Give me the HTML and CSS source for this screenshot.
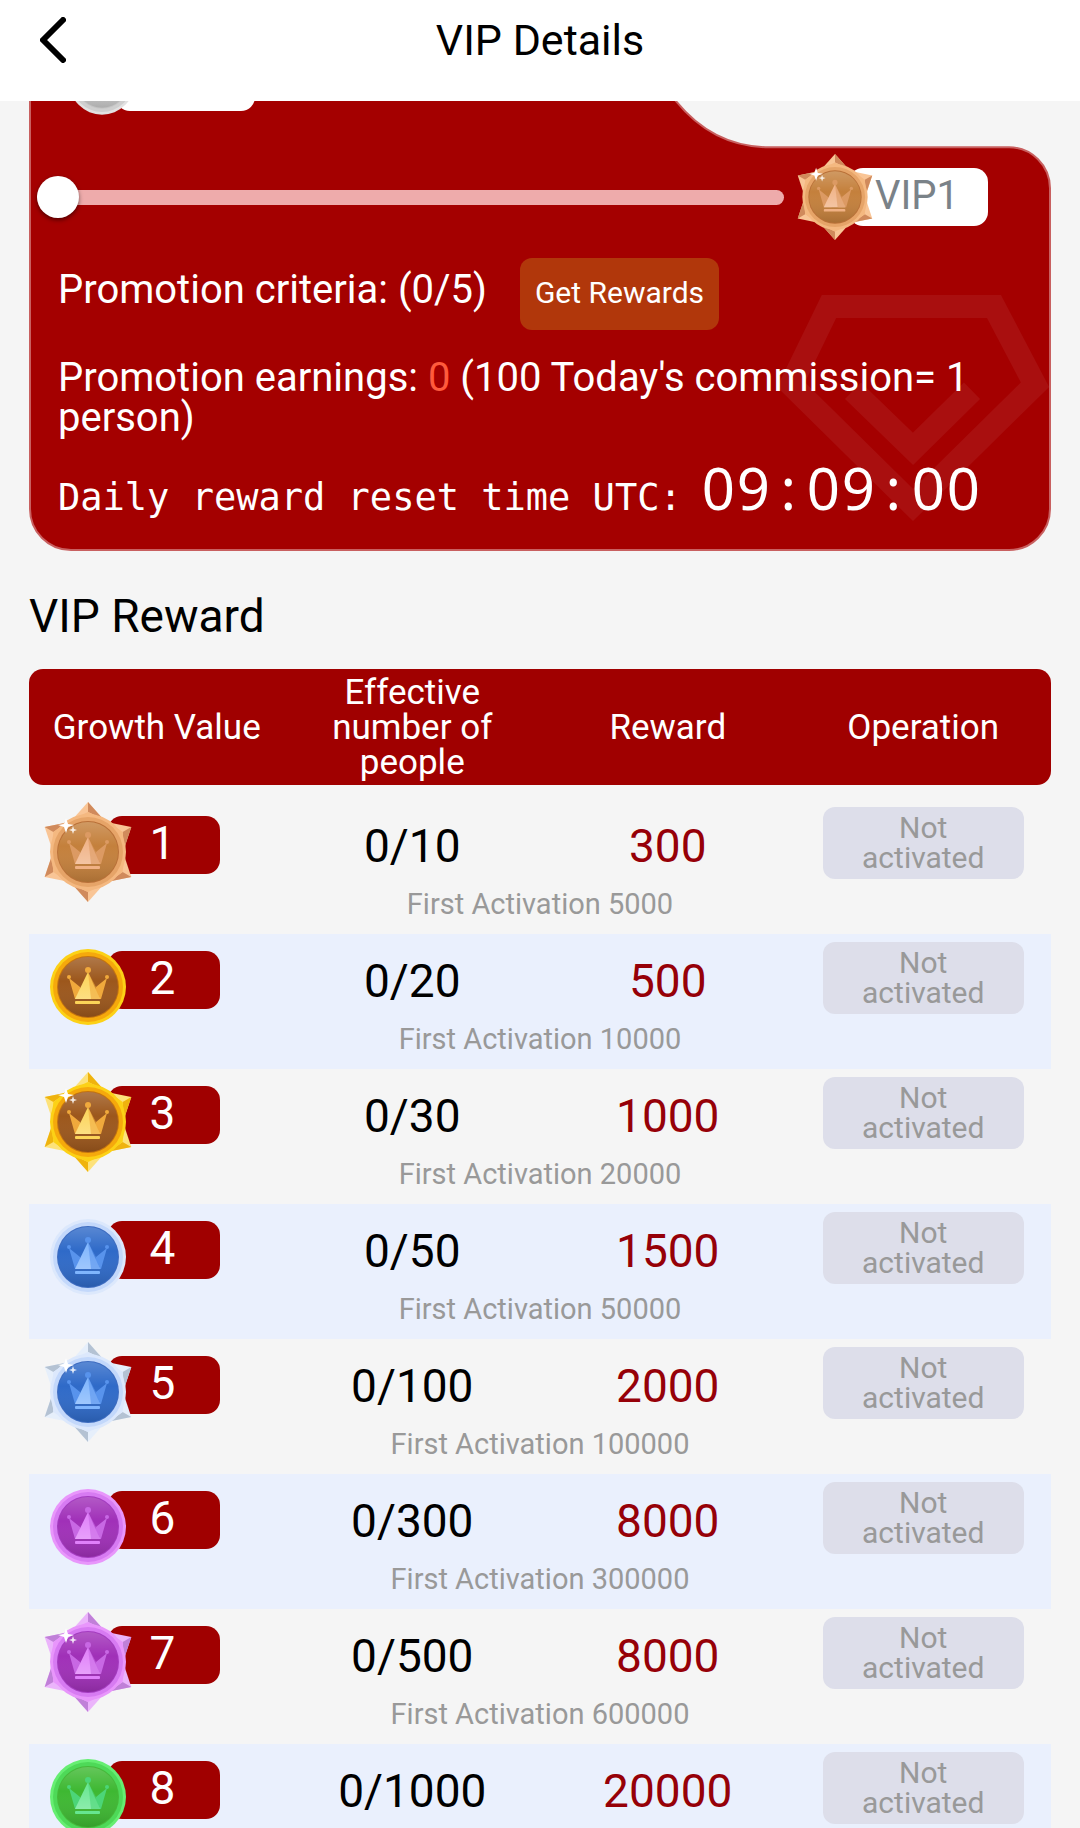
FILE: index.html
```
<!DOCTYPE html>
<html lang="en">
<head>
    <meta charset="UTF-8">
    <meta name="viewport" content="width=device-width, initial-scale=1.0">
    <title>VIP Details</title>
    <link rel="stylesheet" href="styles.css">
</head>
<body>

    <!-- Shared medal shapes, coloured by the medal-* classes -->
    <svg class="sprite" aria-hidden="true">
        <defs>
            <linearGradient id="faceShade" x1="0" y1="0" x2="0" y2="1">
                <stop offset="0" stop-color="#fff" stop-opacity="0.2"/>
                <stop offset="0.4" stop-color="#fff" stop-opacity="0"/>
                <stop offset="1" stop-color="#000" stop-opacity="0.14"/>
            </linearGradient>
            <linearGradient id="crownShade" x1="0" y1="0" x2="0" y2="1">
                <stop offset="0" stop-color="#fff" stop-opacity="0"/>
                <stop offset="1" stop-color="#fff" stop-opacity="0.25"/>
            </linearGradient>
            <g id="spike">
                <path class="spike-light" d="M0-50L-16-32H16Z"/>
                <path class="spike-dark" d="M0-50L15-33L0-40Z"/>
                <path class="spike-mid" d="M0-40L-9-36H9Z"/>
            </g>
            <g id="coin">
                <circle class="rim" r="38"/>
                <circle class="ring" r="35"/>
                <circle class="edge" r="31"/>
                <circle class="face" r="30"/>
                <circle fill="url(#faceShade)" r="30"/>
                <path class="wing" d="M-19-9L-8 0L-4 12H-13ZM19-9L8 0L4 12H13Z"/>
                <path class="crown" d="M0-15L-13 12H12Z"/>
                <path fill="url(#crownShade)" d="M0-15L-13 12H12Z"/>
                <path class="wing" opacity="0.6" d="M0-15L3 12H12L8 0Z"/>
                <rect class="crown" x="-13" y="14" width="25" height="3" rx="1"/>
                <circle class="wing" cy="-17" r="3"/>
                <circle class="wing" cx="-19" cy="-10" r="2"/>
                <circle class="wing" cx="19" cy="-10" r="2"/>
            </g>
        </defs>
        <symbol id="medal-round" viewBox="-44 -50 88 100">
            <use href="#coin"/>
        </symbol>
        <symbol id="medal-star" viewBox="-44 -50 88 100">
            <use href="#spike"/>
            <use href="#spike" transform="rotate(60)"/>
            <use href="#spike" transform="rotate(120)"/>
            <use href="#spike" transform="rotate(180)"/>
            <use href="#spike" transform="rotate(240)"/>
            <use href="#spike" transform="rotate(300)"/>
            <use href="#coin"/>
            <path fill="#fff" d="M-22-34L-20-28L-14-27L-20-25L-22-19L-24-25L-30-27L-24-28Z"/>
            <path fill="#fff" opacity="0.85" d="M-15-26L-14-23L-11-22L-14-21L-15-18L-16-21L-19-22L-16-23Z"/>
        </symbol>
    </svg>

    <header class="topbar">
        <button class="back" type="button" aria-label="Back">
            <svg width="26" height="46" viewBox="0 0 26 46" aria-hidden="true">
                <path d="M23 3L3 23L23 43"/>
            </svg>
        </button>
        <h1>VIP Details</h1>
    </header>

    <main class="content">
        <section class="card">
            <svg class="card-shape" viewBox="0 0 1022 529" preserveAspectRatio="none" aria-hidden="true">
                <path class="card-fill" d="M1 42A41 41 0 0 1 42 1H570C605 1 625 53 647 80C665 102 695 126 740 126H980A41 41 0 0 1 1021 167V487A41 41 0 0 1 980 528H42A41 41 0 0 1 1 487Z"/>
                <path class="card-mark" d="M800 285H965L1006 363L884 483L762 363Z"/>
                <path class="card-mark" d="M824 369L884 427L943 369"/>
            </svg>

            <div class="tag tag-current">
                <svg class="medal medal-silver" aria-hidden="true"><use href="#medal-round"/></svg>
            </div>

            <div class="progress">
                <input class="slider" type="range" min="0" max="5" value="0" aria-label="VIP progress">
                <div class="tag">
                    <svg class="medal medal-bronze" aria-hidden="true"><use href="#medal-star"/></svg>
                    VIP1
                </div>
            </div>

            <div class="criteria">
                <span>Promotion criteria: (0/5)</span>
                <button class="get-rewards" type="button">Get Rewards</button>
            </div>

            <p class="earnings">Promotion earnings: <span class="amount">0</span> (100 Today's commission= 1 person)</p>

            <p class="reset">Daily reward reset time UTC:<time class="clock"><span>0</span><span>9</span><span>:</span><span>0</span><span>9</span><span>:</span><span>0</span><span>0</span></time></p>
        </section>

        <h2>VIP Reward</h2>

        <table class="rewards">
            <thead>
                <tr>
                    <th>Growth Value</th>
                    <th>Effective number of people</th>
                    <th>Reward</th>
                    <th>Operation</th>
                </tr>
            </thead>
            <tbody>
                <tr>
                    <td><div class="level"><svg class="medal medal-bronze" aria-hidden="true"><use href="#medal-star"/></svg>1</div></td>
                    <td>0/10</td>
                    <td class="reward">300</td>
                    <td><button class="activate" type="button" disabled>Not activated</button></td>
                </tr>
                <tr><td class="note" colspan="4">First Activation 5000</td></tr>
            </tbody>
            <tbody>
                <tr>
                    <td><div class="level"><svg class="medal medal-gold" aria-hidden="true"><use href="#medal-round"/></svg>2</div></td>
                    <td>0/20</td>
                    <td class="reward">500</td>
                    <td><button class="activate" type="button" disabled>Not activated</button></td>
                </tr>
                <tr><td class="note" colspan="4">First Activation 10000</td></tr>
            </tbody>
            <tbody>
                <tr>
                    <td><div class="level"><svg class="medal medal-gold" aria-hidden="true"><use href="#medal-star"/></svg>3</div></td>
                    <td>0/30</td>
                    <td class="reward">1000</td>
                    <td><button class="activate" type="button" disabled>Not activated</button></td>
                </tr>
                <tr><td class="note" colspan="4">First Activation 20000</td></tr>
            </tbody>
            <tbody>
                <tr>
                    <td><div class="level"><svg class="medal medal-blue" aria-hidden="true"><use href="#medal-round"/></svg>4</div></td>
                    <td>0/50</td>
                    <td class="reward">1500</td>
                    <td><button class="activate" type="button" disabled>Not activated</button></td>
                </tr>
                <tr><td class="note" colspan="4">First Activation 50000</td></tr>
            </tbody>
            <tbody>
                <tr>
                    <td><div class="level"><svg class="medal medal-blue" aria-hidden="true"><use href="#medal-star"/></svg>5</div></td>
                    <td>0/100</td>
                    <td class="reward">2000</td>
                    <td><button class="activate" type="button" disabled>Not activated</button></td>
                </tr>
                <tr><td class="note" colspan="4">First Activation 100000</td></tr>
            </tbody>
            <tbody>
                <tr>
                    <td><div class="level"><svg class="medal medal-purple" aria-hidden="true"><use href="#medal-round"/></svg>6</div></td>
                    <td>0/300</td>
                    <td class="reward">8000</td>
                    <td><button class="activate" type="button" disabled>Not activated</button></td>
                </tr>
                <tr><td class="note" colspan="4">First Activation 300000</td></tr>
            </tbody>
            <tbody>
                <tr>
                    <td><div class="level"><svg class="medal medal-purple" aria-hidden="true"><use href="#medal-star"/></svg>7</div></td>
                    <td>0/500</td>
                    <td class="reward">8000</td>
                    <td><button class="activate" type="button" disabled>Not activated</button></td>
                </tr>
                <tr><td class="note" colspan="4">First Activation 600000</td></tr>
            </tbody>
            <tbody>
                <tr>
                    <td><div class="level"><svg class="medal medal-green" aria-hidden="true"><use href="#medal-round"/></svg>8</div></td>
                    <td>0/1000</td>
                    <td class="reward">20000</td>
                    <td><button class="activate" type="button" disabled>Not activated</button></td>
                </tr>
            </tbody>
        </table>
    </main>

</body>
</html>
```
FILE: styles.css
```
* {
    box-sizing: border-box;
}

body {
    display: flex;
    flex-direction: column;
    height: 100vh;
    margin: 0;
    overflow: hidden;
    background-color: #f5f5f5;
    color: #000;
    font-family: Roboto, sans-serif;
}

button {
    border: 0;
    padding: 0;
    font-family: inherit;
    cursor: pointer;
}

.sprite {
    position: absolute;
    width: 0;
    height: 0;
}

/* Top bar */
.topbar {
    display: grid;
    grid-template-columns: 1fr auto 1fr;
    align-items: center;
    flex: none;
    padding: 15px 40px 36px;
    background-color: #fff;
    position: relative;
    z-index: 1;
}

.topbar h1 {
    margin: 0;
    font-size: 43px;
    font-weight: 400;
    line-height: 50px;
}

.back {
    width: 26px;
    height: 46px;
    background: none;
}

.back svg {
    display: block;
    fill: none;
    stroke: #000;
    stroke-width: 6;
    stroke-linecap: round;
    stroke-linejoin: round;
}

.content {
    flex: 1;
    min-height: 0;
    overflow: hidden;
    padding: 0 29px;
}

/* Status card, scrolled partly under the top bar */
.card {
    position: relative;
    z-index: 0;
    margin-top: -80px;
    padding: 32px 29px 23px;
    color: #fff;
    font-size: 40px;
    line-height: 40px;
}

.card-shape {
    position: absolute;
    inset: 0;
    z-index: -1;
    width: 100%;
    height: 100%;
}

.card-fill {
    fill: #a40000;
    stroke: #c86060;
    stroke-width: 2;
}

.card-mark {
    fill: none;
    stroke: #fff;
    stroke-opacity: 0.06;
    stroke-width: 23;
}

.tag {
    position: relative;
    flex: none;
    width: 139px;
    height: 58px;
    padding-left: 26px;
    border-radius: 14px;
    background-color: #fff;
    color: #7a8288;
    font-size: 40px;
    line-height: 56px;
}

.tag .medal {
    left: -52px;
    top: -14px;
    width: 76px;
    height: 86px;
}

.tag-current {
    margin-left: 58px;
}

.progress {
    display: flex;
    align-items: center;
    gap: 65px;
    margin: 57px 34px 0 -21px;
}

.slider {
    flex: 1;
    appearance: none;
    height: 42px;
    margin: 0;
    background: none;
}

.slider::-webkit-slider-runnable-track {
    height: 15px;
    border-radius: 8px;
    background-color: #eeabab;
}

.slider::-webkit-slider-thumb {
    appearance: none;
    width: 42px;
    height: 42px;
    margin-top: -14px;
    border-radius: 50%;
    background-color: #fff;
    box-shadow: 0 2px 4px rgba(0, 0, 0, 0.5);
}

.criteria {
    display: flex;
    align-items: baseline;
    gap: 33px;
    margin-top: 32px;
}

.get-rewards {
    width: 199px;
    height: 72px;
    padding-bottom: 3px;
    border-radius: 12px;
    background-color: #b1370b;
    color: #fff;
    font-size: 30px;
}

.earnings {
    margin: 28px 0 0;
}

.amount {
    color: #ff5a3c;
}

.reset {
    display: flex;
    align-items: baseline;
    gap: 19px;
    margin: 20px 0 0;
    font-family: "DejaVu Sans Mono", monospace;
    font-size: 37px;
    line-height: 60px;
    white-space: nowrap;
}

.clock {
    display: flex;
    font-family: "Noto Sans", sans-serif;
    font-size: 58px;
}

.clock span {
    width: 35px;
    text-align: center;
}

h2 {
    margin: 38px 0 26px;
    font-size: 46px;
    font-weight: 400;
    line-height: 54px;
}

/* Reward table */
.rewards {
    width: 100%;
    table-layout: fixed;
    border-collapse: separate;
    border-spacing: 0;
    text-align: center;
}

.rewards th {
    height: 116px;
    padding: 5px 20px;
    background-color: #a00000;
    color: #fff;
    font-size: 35px;
    font-weight: 400;
    line-height: 35px;
}

.rewards th:first-child {
    border-radius: 14px 0 0 14px;
}

.rewards th:last-child {
    border-radius: 0 14px 14px 0;
}

.rewards thead::after {
    content: "";
    display: block;
    height: 14px;
}

.rewards tbody:nth-of-type(even) {
    background-color: #eaf0fd;
}

.rewards td {
    height: 85px;
    padding: 8px 0 0;
    font-size: 46px;
    line-height: 77px;
    vertical-align: top;
}

.rewards td:nth-child(2),
.rewards td:nth-child(3) {
    padding-top: 10px;
    line-height: 75px;
}

.rewards .reward {
    color: #960008;
}

.rewards .note {
    height: 50px;
    padding: 0;
    color: #999;
    font-size: 29px;
    line-height: 40px;
}

.level {
    position: relative;
    width: 112px;
    height: 58px;
    margin: 9px 0 0 79px;
    padding-right: 3px;
    border-radius: 14px;
    background-color: #a00000;
    color: #fff;
    line-height: 54px;
}

.activate {
    width: 201px;
    height: 72px;
    padding: 0 20px;
    border-radius: 12px;
    background-color: #dddeea;
    color: #999;
    font-size: 30px;
    line-height: 30px;
    vertical-align: top;
    cursor: default;
}

/* Medals */
.medal {
    position: absolute;
    left: -64px;
    top: -14px;
    width: 88px;
    height: 100px;
}

.rim { fill: var(--rim); }
.ring { fill: var(--ring); }
.edge { fill: var(--edge); }
.face { fill: var(--face); }
.crown { fill: var(--crown); }
.wing { fill: var(--wing); }
.spike-light { fill: var(--spike); }
.spike-dark { fill: var(--spike-dark); }
.spike-mid { fill: var(--rim); }

.medal-bronze {
    --rim: #f4b880;
    --ring: #e6a468;
    --edge: #b97038;
    --face: #c4803c;
    --crown: #f0b184;
    --wing: #dc9a63;
    --spike: #f9c596;
    --spike-dark: #d08a5c;
}

.medal-silver {
    --rim: #e2e2e2;
    --ring: #cfcfcf;
    --edge: #c4c4c4;
    --face: #c9c9c9;
    --crown: #eee;
    --wing: #ddd;
}

.medal-gold {
    --rim: #fcd116;
    --ring: #f5a90c;
    --edge: #c47310;
    --face: #9c571c;
    --crown: #fcd458;
    --wing: #f0a93c;
    --spike: #fde27a;
    --spike-dark: #efb30e;
}

.medal-blue {
    --rim: #dce8fc;
    --ring: #c3d8fb;
    --edge: #3e6cc0;
    --face: #2f6ac8;
    --crown: #7fb5fd;
    --wing: #5893ec;
    --spike: #e6effb;
    --spike-dark: #b4c2d3;
}

.medal-purple {
    --rim: #e896fb;
    --ring: #d77bf2;
    --edge: #a43cc0;
    --face: #a030b8;
    --crown: #e080fa;
    --wing: #c868e4;
    --spike: #ebb4fb;
    --spike-dark: #c080d8;
}

.medal-green {
    --rim: #66ee72;
    --ring: #4ed958;
    --edge: #46b83a;
    --face: #3eb832;
    --crown: #66e690;
    --wing: #4cd578;
}
```
